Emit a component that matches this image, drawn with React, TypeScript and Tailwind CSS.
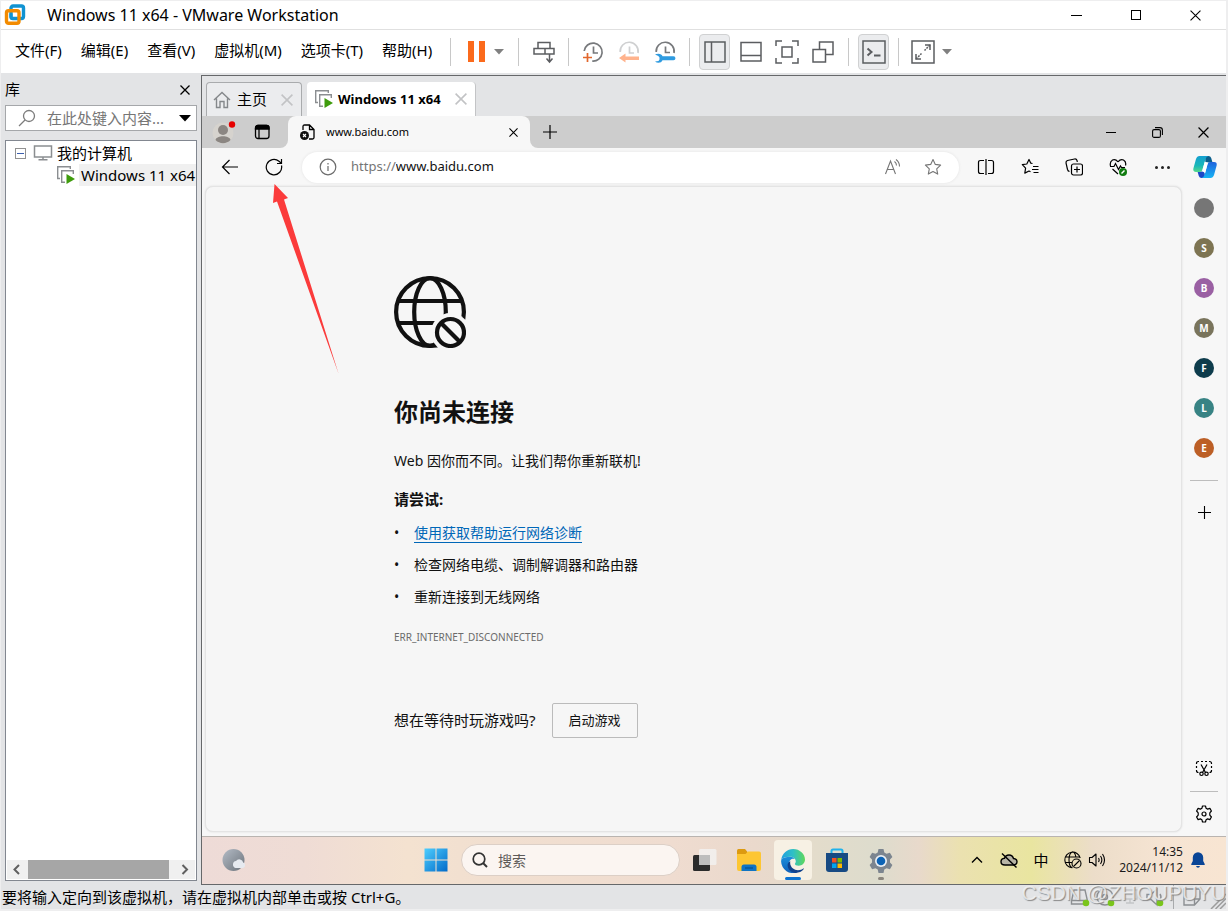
import type { ReactNode } from "react";

const MENUS = ["文件(F)", "编辑(E)", "查看(V)", "虚拟机(M)", "选项卡(T)", "帮助(H)"];

const SITES = [
  { letter: "", label: "站点", color: "bg-[#767676]" },
  { letter: "S", label: "站点 S", color: "bg-[#7d7452]" },
  { letter: "B", label: "站点 B", color: "bg-[#9a60a3]" },
  { letter: "M", label: "站点 M", color: "bg-[#79745c]" },
  { letter: "F", label: "站点 F", color: "bg-[#0e3c4c]" },
  { letter: "L", label: "站点 L", color: "bg-[#388384]" },
  { letter: "E", label: "站点 E", color: "bg-[#bc5f26]" },
];

type IconProps = { size?: number; box?: string; children: ReactNode; className?: string; width?: number };

function Icon({ size = 24, box = "0 0 24 24", width = 1, className = "", children }: IconProps) {
  return (
    <svg
      width={size}
      height={size}
      viewBox={box}
      fill="none"
      stroke="currentColor"
      strokeWidth={width}
      className={"block shrink-0 " + className}
      aria-hidden="true"
    >
      {children}
    </svg>
  );
}

function IconButton({ label, className = "", children }: { label: string; className?: string; children: ReactNode }) {
  return (
    <button type="button" aria-label={label} className={"flex shrink-0 items-center justify-center " + className}>
      {children}
    </button>
  );
}

function Separator() {
  return <span className="h-7 w-px shrink-0 bg-[#c8c8c8]" />;
}

function Caret({ className = "" }: { className?: string }) {
  return (
    <svg width="10" height="6" viewBox="0 0 10 6" className={"block " + className} aria-hidden="true">
      <path d="M0 0h10L5 5.5z" fill="currentColor" />
    </svg>
  );
}

function CloseGlyph({ size = 10, width = 1 }: { size?: number; width?: number }) {
  return (
    <Icon size={size} box="0 0 10 10" width={width}>
      <path d="M.5.5l9 9M9.500.5l-9 9" />
    </Icon>
  );
}

function VmIcon() {
  return (
    <Icon size={20} box="0 0 20 20" width={1.4} className="text-[#8b8e91]">
      <path d="M4 13.500H1.700V1.700h12.600V4" />
      <path d="M9 17.300H5.700V5.700h11.600V9" />
      <path d="M10.500 9v10l8.500-5z" fill="#3f9c0d" stroke="none" />
    </Icon>
  );
}

function TitleBar() {
  return (
    <header className="flex h-7 items-center bg-white">
      <svg width="22" height="22" viewBox="0 0 22 22" className="ml-[3px] block" fill="none" aria-hidden="true">
        <rect x="7" y="2" width="12.500" height="12.500" rx="2" stroke="#1093d2" strokeWidth="3.400" />
        <rect x="2.500" y="6.800" width="12.500" height="12.500" rx="2" stroke="#f38b00" strokeWidth="3.400" />
        <path d="M7 9.500V13q0 1.500 1.500 1.500H12" stroke="#1093d2" strokeWidth="3" />
      </svg>
      <h1 className="ml-[21px] text-[16px]">Windows 11 x64 - VMware Workstation</h1>
      <div className="ml-auto flex pr-[2px]">
        <IconButton label="最小化" className="h-7 w-[60px]">
          <span className="h-px w-[11px] bg-black" />
        </IconButton>
        <IconButton label="最大化" className="h-7 w-[60px]">
          <span className="size-[10px] border border-black" />
        </IconButton>
        <IconButton label="关闭" className="h-7 w-[58px]">
          <CloseGlyph size={11} />
        </IconButton>
      </div>
    </header>
  );
}

function MenuBar() {
  return (
    <div className="flex h-11 items-center border-t border-[#e0e0e0] bg-white text-[#5b5d60]">
      <nav className="flex w-[449px] shrink-0 gap-[19px] pb-[2px] pl-[14px] text-[15px] text-black">
        {MENUS.map((m) => (
          <button type="button" key={m} className="whitespace-nowrap">
            {m}
          </button>
        ))}
      </nav>
      <Separator />
      <IconButton label="挂起" className="ml-4 w-[18px]">
        <span className="flex gap-[5px]">
          <span className="h-[21px] w-[6px] bg-[#fb6a1c]" />
          <span className="h-[21px] w-[6px] bg-[#fb6a1c]" />
        </span>
      </IconButton>
      <IconButton label="电源选项" className="mr-[5px] w-7 text-[#808080]">
        <Caret />
      </IconButton>
      <span className="flex items-center">
        <Separator />
        <IconButton label="发送 Ctrl+Alt+Del" className="w-[49px]">
          <Icon width={1.5}>
            <path d="M6 2.500h12v6H6zM2 8.500h20v5.500H2zM13 8.500V14M17.500 14v8M14.500 18.500l3 3.500 3-3.500" />
          </Icon>
        </IconButton>
        <Separator />
      </span>
      <IconButton label="拍摄快照" className="ml-[6px] w-9">
        <Icon width={1.7}>
          <path d="M3.200 11a9 9 0 1 1 8 10M12.500 6.500V13H17" stroke="#77797c" />
          <path d="M2 17.500h9M6.500 13v9" stroke="#e2672d" />
        </Icon>
      </IconButton>
      <IconButton label="恢复快照" className="w-9">
        <Icon width={1.7}>
          <path d="M3.200 12a9 9 0 1 1 17.800 1M12.500 6.500V13H17" stroke="#cfd0d1" />
          <path d="M22 16.500H8.500V13.500L2 18l6.500 4.500V20H22z" fill="#ffb38d" stroke="none" />
        </Icon>
      </IconButton>
      <IconButton label="管理快照" className="w-9">
        <Icon width={1.7}>
          <path d="M3.200 12a9 9 0 1 1 17.800 1M12.500 6.500V12.500H17" stroke="#77797c" />
          <path
            d="M2 14.500c3-1.500 7-.8 7.500 1.800H20.500a1.900 1.900 0 0 1 0 3.900H9.500C8.500 23 4.500 23.500 2 21.500l3.500-.5 1-1.500v-2l-1.200-1.500z"
            fill="#2f9be0"
            stroke="none"
          />
        </Icon>
      </IconButton>
      <span className="ml-[6px] flex items-center">
        <Separator />
      </span>
      <IconButton label="显示库" className="ml-[9px] h-9 w-[31px] rounded-[4px] border border-[#d0d1d2] bg-[#ebecee]">
        <Icon width={1.5}>
          <path d="M2 2h20v20H2zM8.500 2v20" />
        </Icon>
      </IconButton>
      <IconButton label="显示缩略图栏" className="ml-[3px] w-9">
        <Icon width={1.5}>
          <path d="M2 2.500h20v18.500H2zM2 15.500h20" />
        </Icon>
      </IconButton>
      <IconButton label="全屏" className="w-9">
        <Icon width={1.5}>
          <path d="M7 7h10v10H7zM1 6V1h6M17 1h6v5M23 18v5h-6M7 23H1v-5" />
        </Icon>
      </IconButton>
      <IconButton label="Unity" className="w-9">
        <Icon width={1.5}>
          <path d="M2 9.500h12.500V22H2zM8.500 9.500V2H22v12.500h-7.500" />
        </Icon>
      </IconButton>
      <span className="ml-[7px] flex items-center">
        <Separator />
      </span>
      <IconButton label="控制台视图" className="ml-[9px] h-9 w-[31px] rounded-[4px] border border-[#d0d1d2] bg-[#ebecee]">
        <Icon width={1.5}>
          <path d="M1 1h22v22H1z" />
          <path d="M5.500 8.500l4 3.500-4 3.500M12 15.500h6.500" strokeWidth="2" />
        </Icon>
      </IconButton>
      <span className="ml-[9px] flex items-center">
        <Separator />
      </span>
      <IconButton label="自由拉伸" className="ml-3 w-6">
        <Icon width={1.5}>
          <path d="M1 1h22v22H1z" />
          <path d="M14 5h5v5M10 19H5v-5" />
          <path d="M19 5l-5.500 5.500M5 19l5.500-5.500" strokeDasharray="2 1" />
        </Icon>
      </IconButton>
      <IconButton label="拉伸选项" className="w-6 text-[#808080]">
        <Caret />
      </IconButton>
    </div>
  );
}

function Library() {
  return (
    <aside className="flex w-[200px] shrink-0 flex-col pr-1 pb-1 pl-1">
      <div className="flex h-[31px] items-center justify-between pr-[7px]">
        <h2 className="text-[15px]">库</h2>
        <IconButton label="关闭库" className="size-[10px]">
          <CloseGlyph width={1.3} />
        </IconButton>
      </div>
      <div className="flex h-[26px] items-center border border-[#a5a7aa] bg-white">
        <Icon size={18} box="0 0 18 18" width={1.3} className="ml-3 text-[#7c7c7c]">
          <circle cx="11" cy="7" r="5.500" />
          <path d="M7 11l-6 6" />
        </Icon>
        <input
          aria-label="搜索库"
          placeholder="在此处键入内容..."
          className="ml-[11px] w-full min-w-0 flex-1 bg-transparent text-[15px] text-black outline-none placeholder:text-[#767676]"
        />
        <IconButton label="搜索选项" className="h-full w-[22px] text-black">
          <svg width="12" height="7" viewBox="0 0 12 7" aria-hidden="true">
            <path d="M0 0h12L6 6.500z" fill="currentColor" />
          </svg>
        </IconButton>
      </div>
      <div className="mt-[9px] flex flex-1 flex-col border border-[#828790] bg-white">
        <div className="flex-1 pt-px text-[15px] leading-[22px] whitespace-nowrap">
          <div className="flex items-center pl-[9px]">
            <button
              type="button"
              aria-label="折叠"
              className="flex size-[11px] items-center justify-center border border-[#919191]"
            >
              <span className="h-px w-[7px] bg-[#3c5fae]" />
            </button>
            <Icon size={20} box="0 0 20 20" width={1.5} className="ml-[7px] text-[#8b8e91]">
              <path d="M1.500 3h17v11h-17zM10 14v3M5.500 16.800h9" />
            </Icon>
            <span className="ml-1">我的计算机</span>
          </div>
          <div className="flex items-center pl-[50px]">
            <VmIcon />
            <span className="ml-[3px] flex-1 bg-[#f0f0f0] pl-[2px] leading-[22px]">Windows 11 x64</span>
          </div>
        </div>
        <div className="mx-px mb-px flex h-[19px] items-center bg-[#f0f0f0] text-[#606060]">
          <IconButton label="向左滚动" className="w-[21px]">
            <Icon size={11} box="0 0 11 11" width={2}>
              <path d="M7 1L2.500 5.500 7 10" />
            </Icon>
          </IconButton>
          <span className="mr-[5px] h-full flex-1 bg-[#a6a6a6]" />
          <IconButton label="向右滚动" className="w-[21px]">
            <Icon size={11} box="0 0 11 11" width={2}>
              <path d="M3.500 1L8 5.500 3.500 10" />
            </Icon>
          </IconButton>
        </div>
      </div>
    </aside>
  );
}

function VmTabs() {
  return (
    <div className="flex h-10 items-end gap-[5px] bg-[#e3e4e6] pl-1">
      <div className="flex h-[34px] w-24 items-center rounded-t-[4px] border border-b-0 border-[#a9abad] bg-[#ebecee] pl-[6px]">
        <Icon size={18} box="0 0 18 18" width={1.4} className="text-[#85888b]">
          <path d="M1 9l8-7.500L17 9M3.500 7.500v9h3.500v-6h4v6h3.500v-9" />
        </Icon>
        <button type="button" className="ml-[6px] text-[15px]">
          主页
        </button>
        <IconButton label="关闭主页" className="mr-2 ml-auto text-[#c2c3c5]">
          <CloseGlyph size={12} width={1.3} />
        </IconButton>
      </div>
      <div className="flex h-[34px] w-[169px] items-center rounded-t-[4px] border-r border-[#c3c4c6] bg-white pl-[7px]">
        <VmIcon />
        <button type="button" className="ml-1 pt-px text-[13px] font-bold whitespace-nowrap">
          Windows 11 x64
        </button>
        <IconButton label="关闭 Windows 11 x64" className="mr-2 ml-auto text-[#c2c3c5]">
          <CloseGlyph size={12} width={1.3} />
        </IconButton>
      </div>
    </div>
  );
}

function EdgeTabs() {
  return (
    <div className="flex h-8 bg-[#f7f7f7]">
      <div className="flex w-[86px] items-center rounded-br-[8px] bg-[#cdcdcd]">
        <IconButton label="个人资料" className="w-11">
          <Icon size={24} width={1}>
            <circle cx="11" cy="13" r="10.500" fill="#d6d3ce" stroke="none" />
            <circle cx="11" cy="10" r="5" fill="#8b8682" stroke="none" />
            <path d="M3.500 20c1-5 14-5 15 0a10.500 10.500 0 0 1-15 0z" fill="#8b8682" stroke="none" />
            <circle cx="20" cy="4.500" r="3.200" fill="#e60000" stroke="none" />
          </Icon>
        </IconButton>
        <IconButton label="标签页操作" className="w-8">
          <Icon size={16} box="0 0 16 16" width={1.3}>
            <rect x="1.500" y="1.500" width="13.500" height="13" rx="2.500" />
            <path d="M1.500 5V4q0-2.500 2.500-2.500h8.500Q15 1.500 15 4v1z" fill="currentColor" />
            <path d="M5 5v9.500" />
          </Icon>
        </IconButton>
      </div>
      <div className="bg-[linear-gradient(#cdcdcd_50%,#f7f7f7_50%)]">
        <div className="flex h-full w-[242px] items-center rounded-t-[8px] bg-[#f7f7f7] pl-3">
          <Icon size={16} box="0 0 16 16" width={1.3}>
            <path d="M3 6V2.500Q3 1 4.500 1h5L14 5.500v8q0 1.500-1.500 1.500H9M9.500 1v4.500H14" />
            <circle cx="4.500" cy="11.500" r="4.500" fill="#111" stroke="none" />
            <path d="M3 10l3 3M6 10l-3 3" stroke="#fff" strokeWidth="1.100" />
          </Icon>
          <span className="ml-[10px] text-[11px]">www.baidu.com</span>
          <IconButton label="关闭标签页" className="mr-3 ml-auto">
            <CloseGlyph size={9} width={1.2} />
          </IconButton>
        </div>
      </div>
      <div className="flex flex-1 rounded-bl-[8px] bg-[#cdcdcd]">
        <IconButton label="新建标签页" className="w-10">
          <Icon size={14} box="0 0 14 14" width={1.2}>
            <path d="M7 0v14M0 7h14" />
          </Icon>
        </IconButton>
        <div className="ml-auto flex">
          <IconButton label="最小化浏览器" className="w-[46px]">
            <span className="h-px w-[10px] bg-black" />
          </IconButton>
          <IconButton label="还原浏览器" className="w-[46px]">
            <Icon size={11} box="0 0 11 11" width={1.1}>
              <rect x=".6" y="2.600" width="7.800" height="7.800" rx="1.500" />
              <path d="M3 .6h5Q10.400.6 10.400 3v5" />
            </Icon>
          </IconButton>
          <IconButton label="关闭浏览器" className="w-[46px]">
            <CloseGlyph size={11} width={1.1} />
          </IconButton>
        </div>
      </div>
    </div>
  );
}

function Copilot() {
  return (
    <svg width="24" height="24" viewBox="0 0 24 24" className="block" aria-hidden="true">
      <defs>
        <linearGradient id="cpA" x1="0" y1="0" x2="0" y2="1">
          <stop offset="0" stopColor="#159fd0" />
          <stop offset=".6" stopColor="#19b7b8" />
          <stop offset="1" stopColor="#57d98a" />
        </linearGradient>
        <linearGradient id="cpB" x1="0" y1="0" x2="0" y2="1">
          <stop offset="0" stopColor="#1f63dd" />
          <stop offset="1" stopColor="#17b4f4" />
        </linearGradient>
      </defs>
      <path d="M12 1h3.500Q17.500 1 18.200 3l1.300 4.500h-5l-2 1z" fill="#0b5f8c" />
      <path d="M12 23H8.500Q6.500 23 5.800 21l-1.300-4.500h5l2-1z" fill="#1c48c8" />
      <path d="M6.500 1h9Q13.300 1.500 12.500 4L9.700 14Q9 17 6.500 17H3Q-.5 17 .5 13L3 4Q4 1 6.500 1z" fill="url(#cpA)" />
      <path d="M17.500 23h-9q2.200-.5 3-3l2.800-10Q15 7 17.500 7H21q3.500 0 2.500 4L21 20q-1 3-3.500 3z" fill="url(#cpB)" />
      <path d="M14.800 7.300L14.300 10 12 18.500Q11.500 17 9.300 16.600 9.600 15 9.700 14L11.800 7z" fill="#fff" />
    </svg>
  );
}

function EdgeToolbar() {
  return (
    <div className="flex h-[38px] items-center pl-[6px]">
      <IconButton label="返回" className="w-11">
        <Icon size={18} box="0 0 18 18" width={1.2}>
          <path d="M17 9H1.500M8.500 2L1.500 9l7 7" />
        </Icon>
      </IconButton>
      <IconButton label="刷新" className="mr-[6px] w-11">
        <Icon size={18} box="0 0 18 18" width={1.2}>
          <path d="M16.500 7.500A7.700 7.700 0 1 1 14 3.300L16 5M16.500 1v4.500H12" />
        </Icon>
      </IconButton>
      <div className="mr-[5px] flex h-[31px] min-w-0 flex-1 items-center rounded-full bg-white shadow-[0_0_3px_#e2e2e2]">
        <Icon size={18} box="0 0 18 18" width={1.2} className="ml-[17px] text-[#6b6b6b]">
          <circle cx="9" cy="9" r="7.800" />
          <path d="M9 8v5M9 5v1.500" />
        </Icon>
        <label htmlFor="address" className="ml-[14px] text-[13px] text-[#757575]">
          https://
        </label>
        <input
          id="address"
          defaultValue="www.baidu.com"
          className="min-w-0 flex-1 bg-transparent text-[13px] text-[#111] outline-none"
        />
        <IconButton label="大声朗读" className="w-10 text-[#757575]">
          <Icon size={18} box="0 0 18 18" width={1.1}>
            <path d="M1.500 16L6.500 3l5 13M3.200 11.500h6.600M10.500 3.500q2 1.500 2 4M12 1.500q3.500 2.500 3.500 7" />
          </Icon>
        </IconButton>
        <IconButton label="收藏此页" className="mr-[6px] w-10 text-[#757575]">
          <Icon size={18} box="0 0 18 18" width={1.1}>
            <path
              d="M9 1.500l2.300 4.900 5.300.7-3.900 3.700 1 5.300L9 13.500l-4.700 2.600 1-5.300L1.400 7.100l5.300-.7z"
              strokeLinejoin="round"
            />
          </Icon>
        </IconButton>
      </div>
      <IconButton label="分屏" className="w-11">
        <Icon size={18} box="0 0 18 18" width={1.2}>
          <path d="M7 2.500H3.500Q1.500 2.500 1.500 4.500v9q0 2 2 2H7M11 2.500h3.500q2 0 2 2v9q0 2-2 2H11M9 1v16" />
        </Icon>
      </IconButton>
      <IconButton label="收藏夹" className="w-11">
        <Icon size={18} box="0 0 18 18" width={1.2}>
          <path
            d="M11.500 5.500L9.800 5.200 8 1.500 5.800 6 1.300 6.700l3.300 3.400-.8 5L8 13l1.500.8M12 8.500h5.500M11 11.500h6.500M12.500 14.500h5"
            strokeLinejoin="round"
          />
        </Icon>
      </IconButton>
      <IconButton label="集锦" className="w-11">
        <Icon size={18} box="0 0 18 18" width={1.2}>
          <rect x="6.500" y="6" width="11" height="11" rx="2" />
          <path d="M12 8.500v6M9 11.500h6M4.500 13.500q-1.500-.3-2-2L1 5Q.8 3 2.500 2.500L9.500 1q2-.3 2.500 1.500l.3 1.500" />
        </Icon>
      </IconButton>
      <IconButton label="浏览器概要" className="w-11">
        <Icon size={18} box="0 0 18 18" width={1.2}>
          <path d="M9 3.800Q6.500.8 3.500 2 .5 3.800 1.500 8M9 3.800Q11.500.8 14.500 2q3 1.800 2 5.500M1 8.500h4l1.500-3 3 6 2-3.500 1 1.500h3.500M3.500 11L9 16" />
          <circle cx="14" cy="14" r="4" fill="#107c10" stroke="none" />
          <path d="M12.500 15.500l3-3" stroke="#fff" strokeWidth="1.400" />
        </Icon>
      </IconButton>
      <IconButton label="设置及其他" className="w-11">
        <span className="flex gap-[3px]">
          <span className="size-[3px] rounded-full bg-[#222]" />
          <span className="size-[3px] rounded-full bg-[#222]" />
          <span className="size-[3px] rounded-full bg-[#222]" />
        </span>
      </IconButton>
      <IconButton label="Copilot" className="w-[42px]">
        <Copilot />
      </IconButton>
    </div>
  );
}

function GlobeOff() {
  return (
    <svg width="72" height="72" viewBox="0 0 72 72" fill="none" stroke="#111" strokeWidth="4.200" aria-hidden="true">
      <mask id="gap">
        <rect width="72" height="72" fill="#fff" stroke="none" />
        <circle cx="56.500" cy="56.500" r="19.500" fill="#000" stroke="none" />
      </mask>
      <g mask="url(#gap)">
        <circle cx="36" cy="36" r="33.900" />
        <ellipse cx="36" cy="36" rx="15.800" ry="33.900" />
        <path d="M4 25h64M4 47h64" />
      </g>
      <circle cx="56.500" cy="56.500" r="13.500" />
      <path d="M47 47l19 19" />
    </svg>
  );
}

function OfflinePage() {
  return (
    <main className="ml-[3px] flex-1 rounded-[8px] border border-[#e4e4e4] bg-[#f6f6f6] pt-[89px] pl-[188px] text-[14px] text-[#111] shadow-[0_0_2px_#d8d8d8]">
      <GlobeOff />
      <h2 className="mt-[46px] text-[24px] leading-9 font-bold">你尚未连接</h2>
      <p className="mt-[21px] leading-5">Web 因你而不同。让我们帮你重新联机!</p>
      <h3 className="mt-[18px] text-[15px] leading-5 font-bold">请尝试:</h3>
      <ul className="mt-2 leading-8">
        <li className="flex">
          <span className="w-5">•</span>
          <a href="#diagnose" className="h-5 self-center border-b border-[#0067b8] leading-5 text-[#0067b8]">
            使用获取帮助运行网络诊断
          </a>
        </li>
        <li className="flex">
          <span className="w-5">•</span>检查网络电缆、调制解调器和路由器
        </li>
        <li className="flex">
          <span className="w-5">•</span>重新连接到无线网络
        </li>
      </ul>
      <p className="mt-4 text-[10px] leading-4 text-[#6b6b6b]">ERR_INTERNET_DISCONNECTED</p>
      <div className="mt-[58px] flex items-center gap-4">
        <span className="text-[15px]">想在等待时玩游戏吗?</span>
        <button type="button" className="h-[35px] w-[86px] rounded-[2px] border border-[#bbb] text-[13px]">
          启动游戏
        </button>
      </div>
    </main>
  );
}

function EdgeSidebar() {
  return (
    <aside className="flex w-11 shrink-0 flex-col items-center pt-3">
      <div className="flex flex-col gap-5">
        {SITES.map((s) => (
          <button
            type="button"
            key={s.label}
            aria-label={s.label}
            className={"flex size-5 items-center justify-center rounded-full text-[10px] font-bold text-white " + s.color}
          >
            {s.letter}
          </button>
        ))}
      </div>
      <span className="mt-[22px] h-px w-7 bg-[#bdbdbd]" />
      <IconButton label="添加" className="mt-[25px]">
        <Icon size={13} box="0 0 13 13" width={1.1}>
          <path d="M6.500 0v13M0 6.500h13" />
        </Icon>
      </IconButton>
      <div className="mt-auto flex flex-col items-center pb-[13px]">
        <IconButton label="屏幕截图">
          <Icon size={18} box="0 0 18 18" width={1.2}>
            <path d="M4 2.500H3.500q-2 0-2 2V5M6 2.500h2M10 2.500h2M14 2.500h.5q2 0 2 2V5M1.500 7v2M16.500 7v2M1.500 11v.5q0 2 2 2M16.500 11v.5q0 2-2 2" />
            <path d="M6 5.500l4.500 8M12 5.500l-4.500 8" />
            <circle cx="6.500" cy="14.800" r="1.700" />
            <circle cx="11.500" cy="14.800" r="1.700" />
          </Icon>
        </IconButton>
        <span className="mt-[14px] h-px w-7 bg-[#bdbdbd]" />
        <IconButton label="侧栏设置" className="mt-[13px]">
          <Icon size={18} box="0 0 18 18" width={1.2}>
            <path
              d="M7.500 1h3l.6 2.300 1.500.8 2.300-.7 1.500 2.600L14.800 7.800v2.400l1.600 1.800-1.500 2.600-2.300-.7-1.500.8-.6 2.300h-3l-.6-2.300-1.500-.8-2.300.7L1.600 12l1.600-1.800V7.800L1.600 6l1.500-2.600 2.300.7 1.500-.8z"
              strokeLinejoin="round"
            />
            <circle cx="9" cy="9" r="2" />
          </Icon>
        </IconButton>
      </div>
    </aside>
  );
}

function Taskbar() {
  return (
    <footer className="flex h-12 items-center border-t border-[#b9b4b0] bg-[linear-gradient(90deg,#eedbd7_0%,#efdcd5_10%,#f4e2d0_20%,#f1dfd0_28%,#efdcd0_46%,#ead9cc_54%,#e3dccb_60%,#dddccd_66%,#e8d9cb_70%,#ebe1b0_74%,#e9e5a0_81%,#ecddc9_87%,#f6e4d3_94%,#f8e5d2_100%)] pb-px">
      <IconButton label="天气" className="w-16">
        <svg width="24" height="24" viewBox="0 0 24 24" aria-hidden="true">
          <defs>
            <linearGradient id="moon" x1="0" y1="0" x2="1" y2="1">
              <stop offset="0" stopColor="#b4bcc6" />
              <stop offset="1" stopColor="#6c737b" />
            </linearGradient>
          </defs>
          <circle cx="11.500" cy="12" r="11" fill="url(#moon)" />
          <path d="M13.500 20a3.600 3.600 0 0 1 .5-7 4 4 0 0 1 7.200 1.500 2.900 2.900 0 0 1-.2 5.500z" fill="#e6eaf0" />
        </svg>
      </IconButton>
      <span className="min-w-0 grow-[148] basis-0" />
      <IconButton label="开始" className="w-11">
        <svg width="24" height="24" viewBox="0 0 24 24" aria-hidden="true">
          <defs>
            <linearGradient id="win" gradientUnits="userSpaceOnUse" x1="0" y1="0" x2="24" y2="24">
              <stop offset="0" stopColor="#4fd0ff" />
              <stop offset="1" stopColor="#0068c8" />
            </linearGradient>
          </defs>
          <path d="M.5.5h11v11H.5zM12.500.5h11v11h-11zM.5 12.500h11v11H.5zM12.500 12.500h11v11h-11z" fill="url(#win)" />
        </svg>
      </IconButton>
      <label className="mx-[3px] flex h-8 w-[219px] items-center rounded-full border border-[#dccfc6] bg-[#fbf5f1]">
        <Icon size={16} box="0 0 16 16" width={1.7} className="ml-[10px] text-[#333]">
          <circle cx="7" cy="7" r="5.800" />
          <path d="M11 11l4 4" strokeWidth="2" />
        </Icon>
        <input
          aria-label="搜索"
          placeholder="搜索"
          className="ml-[10px] w-full min-w-0 bg-transparent text-[14px] outline-none placeholder:text-[#5d5a58]"
        />
      </label>
      <IconButton label="任务视图" className="w-11">
        <svg width="24" height="24" viewBox="0 0 24 24" aria-hidden="true">
          <rect x="0" y="7" width="17" height="16" rx="1.500" fill="#2b2b2b" />
          <rect x="6" y="1" width="17.500" height="16" rx="1.500" fill="#f2f2f2" opacity=".8" />
          <path d="M6 7h11v10H6z" fill="#bdbdbd" />
        </svg>
      </IconButton>
      <IconButton label="文件资源管理器" className="w-11">
        <svg width="24" height="24" viewBox="0 0 24 24" aria-hidden="true">
          <path d="M0 2.500Q0 1 1.500 1H8l2.500 3V8H0z" fill="#dc9a10" />
          <path d="M0 6h8.500L11 3.500H22q2 0 2 2V21q0 2-2 2H2q-2 0-2-2z" fill="#fdc632" />
          <path d="M4.500 23v-4q0-2.500 2.500-2.500h10q2.500 0 2.500 2.500v4z" fill="#0f74c4" />
          <path d="M8 20h8" stroke="#0a5798" strokeWidth="1.500" />
        </svg>
      </IconButton>
      <button
        type="button"
        aria-label="Microsoft Edge"
        className="mx-[3px] flex h-10 w-[38px] flex-col items-center justify-end rounded-[4px] bg-[#f7f1e4]"
      >
        <svg width="24" height="24" viewBox="0 0 24 24" aria-hidden="true">
          <defs>
            <linearGradient id="eA" x1="0" y1="0.400" x2="1" y2="0.400">
              <stop offset="0" stopColor="#1f9fe0" />
              <stop offset=".5" stopColor="#2fc0c5" />
              <stop offset="1" stopColor="#5fd85a" />
            </linearGradient>
            <linearGradient id="eB" x1="0" y1="0" x2="0" y2="1">
              <stop offset="0" stopColor="#1b8fdc" />
              <stop offset="1" stopColor="#0f5fb8" />
            </linearGradient>
          </defs>
          <path
            d="M.3 10.500C1.200 4.300 6.200 0 12.200 0 18.800 0 24 5 24 10.600c0 3.800-3 6.100-6.200 6.100-2.600 0-3.900-.9-3.900-1.700 0-.6.900-1 .9-2.700 0-2.500-2.600-4.600-5.900-4.600C4.500 7.700 1.500 9 .3 10.500z"
            fill="url(#eA)"
          />
          <path
            d="M.3 10.500C2 8.500 5 7.700 8.900 7.700c2 0 3.900.8 5 2.200-3.300-.8-6 1.300-6 5.100 0 4.500 3.900 8.300 8.600 8.300A12 12 0 0 1 .1 12.600z"
            fill="url(#eB)"
          />
          <path
            d="M9.300 12.300c-1 5.500 3.600 9 7.700 9 2.300 0 4.100-.7 5.200-1.700.5-.4.900 0 .6.500-2 3-6.100 4.100-8.900 3.800-4-.4-7.600-4.400-7.300-8.100.1-1.500 1.200-3 2.700-3.500z"
            fill="#10418c"
          />
        </svg>
        <span className="mt-1 h-[3px] w-4 rounded-full bg-[#0b72d0]" />
      </button>
      <IconButton label="Microsoft Store" className="w-11">
        <svg width="24" height="24" viewBox="0 0 24 24" aria-hidden="true">
          <path d="M6.500 6V3q0-1.500 1.500-1.500h8q1.500 0 1.500 1.500v3" fill="none" stroke="#1fb2ec" strokeWidth="2" />
          <path d="M1 5h22v16q0 3-3 3H4q-3 0-3-3z" fill="#174a83" />
          <path d="M7 10h4.500v4.500H7z" fill="#f25022" />
          <path d="M12.500 10H17v4.500h-4.500z" fill="#7fba00" />
          <path d="M7 15.500h4.500V20H7z" fill="#00a4ef" />
          <path d="M12.500 15.500H17V20h-4.500z" fill="#ffb900" />
        </svg>
      </IconButton>
      <button type="button" aria-label="设置" className="flex h-10 w-11 flex-col items-center justify-end">
        <svg width="24" height="24" viewBox="0 0 24 24" aria-hidden="true">
          <path
            d="M9.500 0h5l.8 3.400 2.200 1.300 3.400-1 2.500 4.300L21 10.500v3l2.400 2.500-2.500 4.300-3.400-1-2.200 1.300-.8 3.400h-5l-.8-3.400-2.200-1.300-3.400 1L.6 16 3 13.500v-3L.6 8l2.500-4.300 3.400 1 2.200-1.300z"
            fill="#7c858f"
          />
          <circle cx="12" cy="12" r="6" fill="#e9eef3" />
          <circle cx="12" cy="12" r="4.300" fill="#0c63b5" />
        </svg>
        <span className="mt-1 h-[3px] w-[6px] rounded-full bg-[#8b867d]" />
      </button>
      <span className="min-w-0 grow-[58] basis-0" />
      <IconButton label="显示隐藏的图标" className="w-8">
        <Icon size={12} box="0 0 12 12" width={1.4}>
          <path d="M1 8.500l5-5 5 5" />
        </Icon>
      </IconButton>
      <IconButton label="OneDrive" className="w-8">
        <Icon size={18} box="0 0 18 18" width={1.4}>
          <path d="M5 14q-4 0-4-3.200T4.500 7.300Q5.500 4 9 4t4.500 3.500q3.500.3 3.500 3.200T13.500 14z" fill="#b8b5a5" />
          <path d="M2 2.500l14.500 14" />
        </Icon>
      </IconButton>
      <button type="button" className="w-8 text-[15px]">
        中
      </button>
      <IconButton label="网络" className="ml-1 w-6">
        <Icon size={18} box="0 0 18 18" width={1.1}>
          <path d="M16.200 7A7.800 7.800 0 1 0 8 16.700M12 6.500Q11 1 8.500 1 5 2 5 9t3.500 7.700M1.500 6h14M1.500 11.500H8" />
          <circle cx="12.500" cy="12.500" r="4.500" />
          <path d="M15.500 9.500l-6 6" />
        </Icon>
      </IconButton>
      <IconButton label="音量" className="w-6">
        <Icon size={18} box="0 0 18 18" width={1.1}>
          <path d="M1.500 6.500H4L8 3v12l-4-3.500H1.500zM10.500 7q1.300 2 0 4M12.500 5q2.700 4 0 8M14.500 3q4 6 0 12" strokeLinejoin="round" />
        </Icon>
      </IconButton>
      <div className="w-[74px] text-right text-[12px] leading-4 text-[#1a1a1a]">
        <div>14:35</div>
        <div>2024/11/12</div>
      </div>
      <IconButton label="通知" className="mr-[13px] w-[30px]">
        <svg width="16" height="16" viewBox="0 0 16 16" aria-hidden="true">
          <path d="M8 .3A5.200 5.200 0 0 1 13.200 5.500V9l1.500 3v1H1.300v-1l1.500-3V5.500A5.200 5.200 0 0 1 8 .3zM6 14h4q-.5 1.700-2 1.700T6 14z" fill="#0a4596" />
        </svg>
      </IconButton>
    </footer>
  );
}

function StatusBar() {
  return (
    <div className="relative flex h-6 items-center pl-px text-[15px]">
      <span>要将输入定向到该虚拟机，请在虚拟机内部单击或按 Ctrl+G。</span>
      <div className="ml-auto flex h-6 items-center text-[#8c8f92]">
        <Icon size={20} box="0 0 20 20" width={1.4} className="mr-[5px]">
          <path d="M4 3h11l2.500 11V17h-16v-3zM1.500 13.500h16" />
          <circle cx="16" cy="16" r="3.300" fill="#7ac51c" stroke="none" />
        </Icon>
        <Icon size={20} box="0 0 20 20" width={1.4} className="mr-[5px]">
          <circle cx="10" cy="10" r="8" />
          <circle cx="10" cy="10" r="2.500" />
          <circle cx="16" cy="16" r="3.300" fill="#7ac51c" stroke="none" />
        </Icon>
        <Icon size={20} box="0 0 20 20" width={1.4} className="mr-[5px] text-[#c3c5c7]">
          <path d="M4 3h13v9H4zM10 12v4M6 16h8" />
        </Icon>
        <Icon size={20} box="0 0 20 20" width={1.4}>
          <path d="M2 7.500h4l6-5.500v16l-6-5.500H2zM15 7q2 3 0 6" />
          <circle cx="15" cy="16" r="3.300" fill="#7ac51c" stroke="none" />
        </Icon>
        <span className="mx-2 h-6 w-px bg-[#a8aaac]" />
        <Icon size={20} box="0 0 20 20" width={1.4}>
          <path d="M2 2h16v10l-5.500 6H2zM18 12h-5.500v6" />
        </Icon>
        <Icon size={16} box="0 0 16 16" width={1.5} className="ml-2 self-end text-[#9c9c9c]">
          <path d="M1 16L16 1M5.500 16L16 5.500M10 16l6-6" />
        </Icon>
      </div>
      <span className="pointer-events-none absolute -top-2 right-0 font-['Liberation_Sans',sans-serif] text-[21px] whitespace-nowrap text-[#f4f4f4]/80 [text-shadow:1px_1px_1px_#888]">
        CSDN @ZHOUPUYU
      </span>
    </div>
  );
}

export default function App() {
  return (
    <div className="flex min-h-screen flex-col border-t border-r-2 border-b-2 border-l border-[#eeeeef] bg-[#e3e4e6] font-['Noto_Sans','Noto_Sans_CJK_SC',sans-serif] text-black">
      <TitleBar />
      <MenuBar />
      <div className="flex flex-1 pt-px">
        <Library />
        <section className="relative mt-px flex min-w-0 flex-1 flex-col border-t border-b border-l border-[#66686a]">
          <VmTabs />
          <div className="flex flex-1 flex-col bg-[#f7f7f7]">
            <EdgeTabs />
            <EdgeToolbar />
            <div className="flex flex-1">
              <div className="flex min-w-0 flex-1 flex-col pb-1">
                <OfflinePage />
              </div>
              <EdgeSidebar />
            </div>
            <Taskbar />
          </div>
          <svg
            width="68"
            height="192"
            viewBox="0 0 68 192"
            className="pointer-events-none absolute top-[107px] left-[69px]"
            aria-hidden="true"
          >
            <path d="M3.500 1L17 15l-4 1.500L67.500 190.500 6 18.500 2 20z" fill="#fb3b3b" />
          </svg>
        </section>
      </div>
      <StatusBar />
    </div>
  );
}
